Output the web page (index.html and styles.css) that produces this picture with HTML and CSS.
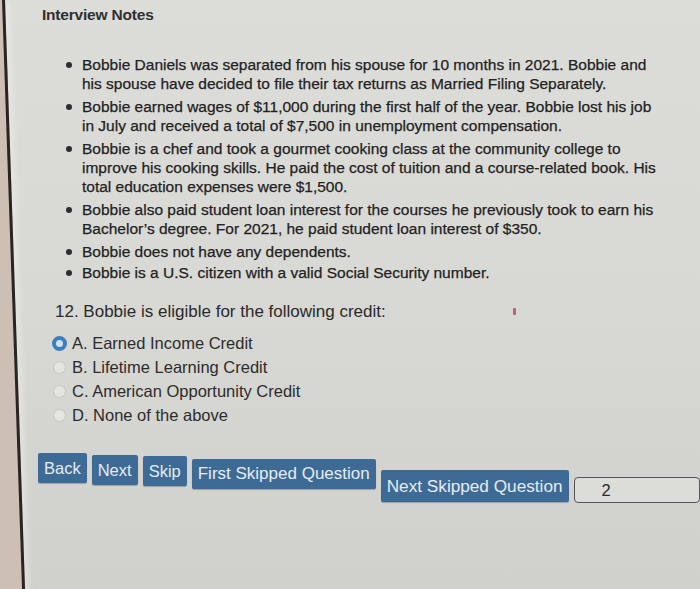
FILE: index.html
```html
<!DOCTYPE html>
<html>
<head>
<meta charset="utf-8">
<link rel="stylesheet" href="styles.css">
</head>
<body>
<div class="screen">
  <div class="bezel"></div>
  <div class="content">
    <h1 class="title">Interview Notes</h1>
    <ul class="notes">
      <li>Bobbie Daniels was separated from his spouse for 10 months in 2021. Bobbie and<br>his spouse have decided to file their tax returns as Married Filing Separately.</li>
      <li>Bobbie earned wages of $11,000 during the first half of the year. Bobbie lost his job<br>in July and received a total of $7,500 in unemployment compensation.</li>
      <li>Bobbie is a chef and took a gourmet cooking class at the community college to<br>improve his cooking skills. He paid the cost of tuition and a course-related book. His<br>total education expenses were $1,500.</li>
      <li>Bobbie also paid student loan interest for the courses he previously took to earn his<br>Bachelor’s degree. For 2021, he paid student loan interest of $350.</li>
      <li class="short">Bobbie does not have any dependents.</li>
      <li class="short">Bobbie is a U.S. citizen with a valid Social Security number.</li>
    </ul>
    <p class="question">12. Bobbie is eligible for the following credit:<span class="mark"></span></p>
    <div class="options">
      <div class="option"><span class="radio checked"></span>A. Earned Income Credit</div>
      <div class="option"><span class="radio"></span>B. Lifetime Learning Credit</div>
      <div class="option"><span class="radio"></span>C. American Opportunity Credit</div>
      <div class="option"><span class="radio"></span>D. None of the above</div>
    </div>
    <div class="nav">
      <button class="btn btn-back">Back</button>
      <button class="btn btn-next">Next</button>
      <button class="btn btn-skip">Skip</button>
      <button class="btn btn-first">First Skipped Question</button>
      <button class="btn btn-nextskip">Next Skipped Question</button>
      <div class="page-box">2</div>
    </div>
  </div>
</div>
</body>
</html>
```

FILE: styles.css
```css
html, body {
  margin: 0;
  padding: 0;
}
body {
  width: 700px;
  height: 589px;
  overflow: hidden;
  font-family: "Liberation Sans", Arial, sans-serif;
  color: #2b2b2b;
  background: linear-gradient(180deg, #dcdcd9 0%, #d8d8d4 50%, #d0d0cc 100%);
}
.screen {
  position: relative;
  width: 700px;
  height: 589px;
}
.bezel {
  position: absolute;
  left: -20px;
  top: 0;
  width: 22px;
  height: 600px;
  background: #cdbfb4;
  border-right: 3px solid #2a2523;
  box-shadow: 6px 0 6px -2px rgba(255,255,255,0.35);
  transform: skewX(1.95deg);
  transform-origin: top left;
}
.content {
  padding: 6px 0 0 42px;
}
.title {
  margin: 0;
  font-size: 15.5px;
  line-height: 18px;
  font-weight: bold;
  color: #2f2f2f;
  letter-spacing: -0.2px;
}
.notes {
  list-style: none;
  margin: 31px 0 0 0;
  padding: 0 0 0 40px;
  font-size: 15.5px;
  line-height: 19px;
  color: #222;
  -webkit-text-stroke: 0.25px #222;
}
.notes li {
  position: relative;
  margin-bottom: 4px;
  white-space: nowrap;
}
.notes li.short {
  margin-bottom: 2px;
}
.notes li::before {
  content: "";
  position: absolute;
  left: -16px;
  top: 7px;
  width: 6px;
  height: 6px;
  border-radius: 50%;
  background: #2d2d2d;
}
.question {
  position: relative;
  margin: 20px 0 0 13px;
  font-size: 17px;
  line-height: 20px;
  color: #2a2a2a;
}
.mark {
  position: absolute;
  left: 458px;
  top: 6px;
  width: 3px;
  height: 7px;
  border-radius: 1px;
  background: #c0607a;
}
.options {
  margin: 9px 0 0 11px;
  font-size: 16.5px;
  line-height: 24px;
  color: #2c2c2c;
}
.option {
  display: flex;
  align-items: center;
}
.radio {
  width: 13px;
  height: 13px;
  border-radius: 50%;
  border: 1px solid #c4c4c0;
  background: #e4e4e1;
  margin-right: 6px;
  box-sizing: border-box;
}
.radio.checked {
  width: 15px;
  height: 15px;
  border: 4px solid #3f7fb9;
  background: #cfe3f4;
  margin-left: -1px;
  margin-right: 5px;
}
.nav {
  display: flex;
  align-items: flex-start;
  gap: 5px;
  margin: 26px 0 0 -4px;
}
.btn {
  font-family: "Liberation Sans", Arial, sans-serif;
  font-size: 16.5px;
  line-height: 20px;
  padding: 5px 6px;
  border: none;
  border-radius: 2px;
  background: #3e6b95;
  color: #e6ebf0;
  white-space: nowrap;
  box-shadow: 0 1px 1px rgba(0,0,0,0.25);
}
.btn-next { margin-top: 2px; }
.btn-skip { margin-top: 3px; }
.btn-first { margin-top: 6px; font-size: 17px; }
.btn-nextskip { margin-top: 17px; font-size: 17.2px; padding: 6px 6px; }
.page-box {
  margin: 24px 0 0 0;
  width: 140px;
  height: 24px;
  border: 1px solid #555;
  border-radius: 4px;
  font-size: 16.5px;
  line-height: 24px;
  padding-left: 27px;
  color: #2a2a2a;
  background: #dcdcd8;
}
```
